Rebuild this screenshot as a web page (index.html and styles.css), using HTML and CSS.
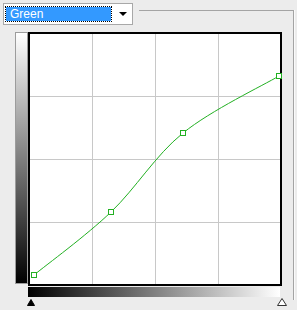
FILE: index.html
```html
<!DOCTYPE html>
<html lang="en">
<head>
    <meta charset="UTF-8">
    <title>Curves</title>
    <link rel="stylesheet" href="styles.css">
</head>
<body>
    <fieldset class="group">
        <legend class="channel">
            <div class="select">
                <span class="select-value">Green</span>
                <span class="select-arrow"></span>
            </div>
        </legend>

        <div class="plot">
            <div class="vbar"></div>
            <svg class="graph" width="254" height="254" viewBox="0 0 254 254">
                <rect x="1" y="1" width="252" height="252" fill="#fff" stroke="#000" stroke-width="2"/>
                <!-- grid -->
                <g stroke="#c8c8c8" stroke-width="1">
                    <line x1="64.5" y1="2" x2="64.5" y2="252"/>
                    <line x1="127.5" y1="2" x2="127.5" y2="252"/>
                    <line x1="190.5" y1="2" x2="190.5" y2="252"/>
                    <line x1="2" y1="64.5" x2="252" y2="64.5"/>
                    <line x1="2" y1="127.5" x2="252" y2="127.5"/>
                    <line x1="2" y1="190.5" x2="252" y2="190.5"/>
                </g>
                <!-- curve -->
                <path d="M6 243 C18.8 232.5 58.2 203.7 83 180 C107.8 156.3 127 123.7 155 101 C183 78.3 235 53.5 251 44"
                      fill="none" stroke="#22b022" stroke-width="1"/>
                <g fill="#fff" stroke="#22b022" stroke-width="1">
                    <rect x="3.5" y="240.5" width="5" height="5"/>
                    <rect x="80.5" y="177.5" width="5" height="5"/>
                    <rect x="152.5" y="98.5" width="5" height="5"/>
                    <rect x="248.5" y="41.5" width="5" height="5"/>
                </g>
            </svg>
        </div>

        <div class="hbar"></div>

        <div class="sliders">
            <svg width="8" height="7" viewBox="0 0 8 7"><path d="M0.5 6.5 L4 0.5 L7.5 6.5 Z" fill="#000" stroke="#000"/></svg>
            <svg width="10" height="8" viewBox="0 0 10 8"><path d="M0.5 7.5 L5 0.5 L9.5 7.5 Z" fill="#fff" stroke="#333"/></svg>
        </div>
    </fieldset>
</body>
</html>
```

FILE: styles.css
```css
body {
    margin: 0;
    width: 297px;
    height: 310px;
    overflow: hidden;
    background-color: #ececec;
    font-family: "Liberation Sans", Arial, sans-serif;
}
.group {
    margin: 0;
    padding: 0;
    width: 294px;
    height: 300px;
    box-sizing: border-box;
    border: none;
    border-top: 1px solid #a4a4a4;
    border-right: 1px solid #a4a4a4;
    box-shadow: 1px 0 0 #fafafa;
    min-width: 0;
}
.channel {
    padding: 0 6px 0 3px;
    margin: 0;
    height: 21px;
}
.select {
    margin-top: 3px;
    width: 124px;
    height: 20px;
    border: 1px solid #a8a8a8;
    background-color: #fff;
    display: flex;
    align-items: center;
    padding: 0 2px;
    box-sizing: content-box;
}
.select-value {
    width: 101px;
    height: 14px;
    line-height: 14px;
    background-color: #3399ff;
    color: #fff;
    font-size: 12px;
    padding-left: 4px;
    outline: 1px dotted #000;
}
.select-arrow {
    margin-left: 8px;
    width: 0;
    height: 0;
    border-left: 4px solid transparent;
    border-right: 4px solid transparent;
    border-top: 4px solid #000;
}
.plot {
    display: flex;
    margin-top: 11px;
    margin-left: 15px;
}
.vbar {
    width: 11px;
    height: 250px;
    border: 1px solid #9c9c9c;
    background: linear-gradient(#ffffff, #000000);
}
.graph {
    display: block;
}
.hbar {
    margin-top: 1px;
    margin-left: 28px;
    width: 252px;
    height: 10px;
    background: linear-gradient(to right, #000000, #ffffff);
}
.sliders {
    display: flex;
    justify-content: space-between;
    align-items: flex-end;
    margin-left: 27px;
    width: 260px;
    height: 9px;
}
.sliders svg {
    display: block;
}
```
